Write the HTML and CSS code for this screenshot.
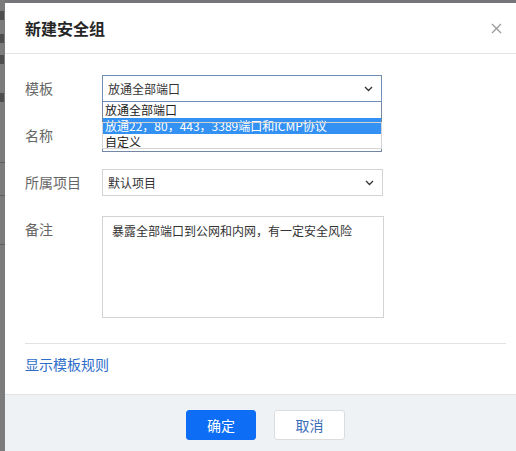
FILE: index.html
```html
<!DOCTYPE html>
<html lang="zh-CN">
<head>
<meta charset="utf-8">
<title>新建安全组</title>
<link rel="stylesheet" href="styles.css">
</head>
<body>
<div class="screen">
  <div class="behind">
    <span class="frag f1"></span>
    <span class="frag f2"></span>
    <span class="frag f3"></span>
    <span class="frag f4"></span>
    <span class="rule r1"></span>
    <span class="rule r2"></span>
    <span class="rule r3"></span>
  </div>
  <div class="modal">
    <div class="modal-header">
      <h1 class="modal-title">新建安全组</h1>
      <svg class="close" width="11" height="11" viewBox="0 0 11 11"><path d="M1 1L10 10M10 1L1 10" stroke="#9a9a9a" stroke-width="1.3" fill="none"/></svg>
    </div>
    <div class="modal-body">
      <div class="form">
        <div class="label">模板</div>
        <div class="field">
          <div class="select focused">
            <span>放通全部端口</span>
            <svg class="chev" width="9" height="6" viewBox="0 0 9 6"><path d="M1 1L4.5 4.5L8 1" stroke="#333" stroke-width="1.3" fill="none"/></svg>
          </div>
          <ul class="options">
            <li>放通全部端口</li>
            <li class="hl">放通22，80，443，3389端口和ICMP协议</li>
            <li>自定义</li>
          </ul>
        </div>
        <div class="label">名称</div>
        <div class="field"><div class="input"></div></div>
        <div class="label">所属项目</div>
        <div class="field">
          <div class="select wide">
            <span>默认项目</span>
            <svg class="chev" width="9" height="6" viewBox="0 0 9 6"><path d="M1 1L4.5 4.5L8 1" stroke="#333" stroke-width="1.3" fill="none"/></svg>
          </div>
        </div>
        <div class="label">备注</div>
        <div class="field">
          <div class="textarea">暴露全部端口到公网和内网，有一定安全风险</div>
        </div>
      </div>
      <div class="divider"></div>
      <a class="rules-link">显示模板规则</a>
    </div>
    <div class="modal-footer">
      <button class="btn primary">确定</button>
      <button class="btn">取消</button>
    </div>
  </div>
</div>
</body>
</html>
```
FILE: styles.css
```css
html, body {
  margin: 0;
  padding: 0;
  overflow: hidden;
  height: 100%;
}
body {
  background: #74767a;
  font-family: "Noto Sans CJK SC", "Noto Sans", sans-serif;
}
.screen {
  display: flex;
  height: 100%;
}
.behind {
  width: 5px;
  flex: none;
  overflow: hidden;
  display: flex;
  flex-direction: column;
  background: #7c7c7c;
}
.frag {
  display: block;
  width: 4px;
  height: 9px;
  background: #3a3a3a;
  opacity: 0.7;
}
.f1 { margin-top: 11px; }
.f2 { margin-top: 14px; }
.f3 { margin-top: 12px; }
.f4 { margin-top: 29px; }
.rule {
  display: block;
  height: 1px;
  background: #5f5f5f;
}
.r1 { margin-top: 60px; }
.r2 { margin-top: 32px; }
.r3 { margin-top: 48px; }

.modal {
  flex: none;
  width: 521px;
  margin-top: 3px;
  background: #fff;
  display: flex;
  flex-direction: column;
}
.modal-header {
  height: 50px;
  border-bottom: 1px solid #e3e3e3;
  display: flex;
  align-items: center;
  justify-content: space-between;
  padding: 0 24px 0 20px;
}
.modal-title {
  margin: 0;
  font-size: 16px;
  font-weight: 700;
  color: #262626;
  line-height: 22px;
}
.close { display: block; }

.modal-body {
  padding: 21px 20px 0 20px;
}
.form {
  display: grid;
  grid-template-columns: 77px auto;
  row-gap: 20px;
  align-items: start;
}
.label {
  font-size: 14px;
  line-height: 27px;
  color: #666;
}
.field {
  position: relative;
}
.select {
  box-sizing: border-box;
  width: 280px;
  height: 27px;
  border: 1px solid #d3d3d3;
  display: flex;
  align-items: center;
  justify-content: space-between;
  padding: 0 8px 0 5px;
  font-size: 12px;
  color: #333;
}
.select.wide { width: 281px; }
.select.focused { border-color: #6f8fb6; }
.chev { display: block; }
.input {
  box-sizing: border-box;
  width: 280px;
  height: 27px;
  border: 1px solid #d3d3d3;
}
.options {
  position: absolute;
  left: 0;
  top: 27px;
  margin: 0;
  padding: 0;
  list-style: none;
  box-sizing: border-box;
  width: 280px;
  border: 1px solid #7388a6;
  border-top: none;
  background: #fff;
  padding-bottom: 1px;
}
.options li {
  height: 16px;
  line-height: 16px;
  font-size: 12px;
  color: #222;
  padding-left: 2px;
  white-space: nowrap;
}
.options li.hl {
  background: #3391f3;
  color: #fff;
}
.textarea {
  box-sizing: border-box;
  width: 282px;
  height: 102px;
  border: 1px solid #d3d3d3;
  padding: 5px 9px;
  font-size: 12px;
  line-height: 18px;
  color: #333;
}
.divider {
  margin-top: 25px;
  border-top: 1px solid #e2e2e2;
}
.rules-link {
  display: block;
  padding: 10px 0 20px;
  font-size: 14px;
  line-height: 20px;
  color: #2d6dc9;
  cursor: pointer;
}
.modal-footer {
  flex: 1;
  border-top: 1px solid #e3e3e3;
  background: #eff2f5;
  display: flex;
  justify-content: center;
  align-items: flex-start;
  gap: 18px;
  padding-top: 15px;
}
.btn {
  box-sizing: border-box;
  width: 71px;
  height: 30px;
  border: 1px solid #dcdcdc;
  border-radius: 3px;
  background: #fff;
  color: #3b6cb8;
  font-family: inherit;
  font-size: 14px;
  padding: 0;
}
.btn.primary {
  width: 70px;
  background: #0d6ef5;
  border-color: #0d6ef5;
  color: #fff;
}
```
